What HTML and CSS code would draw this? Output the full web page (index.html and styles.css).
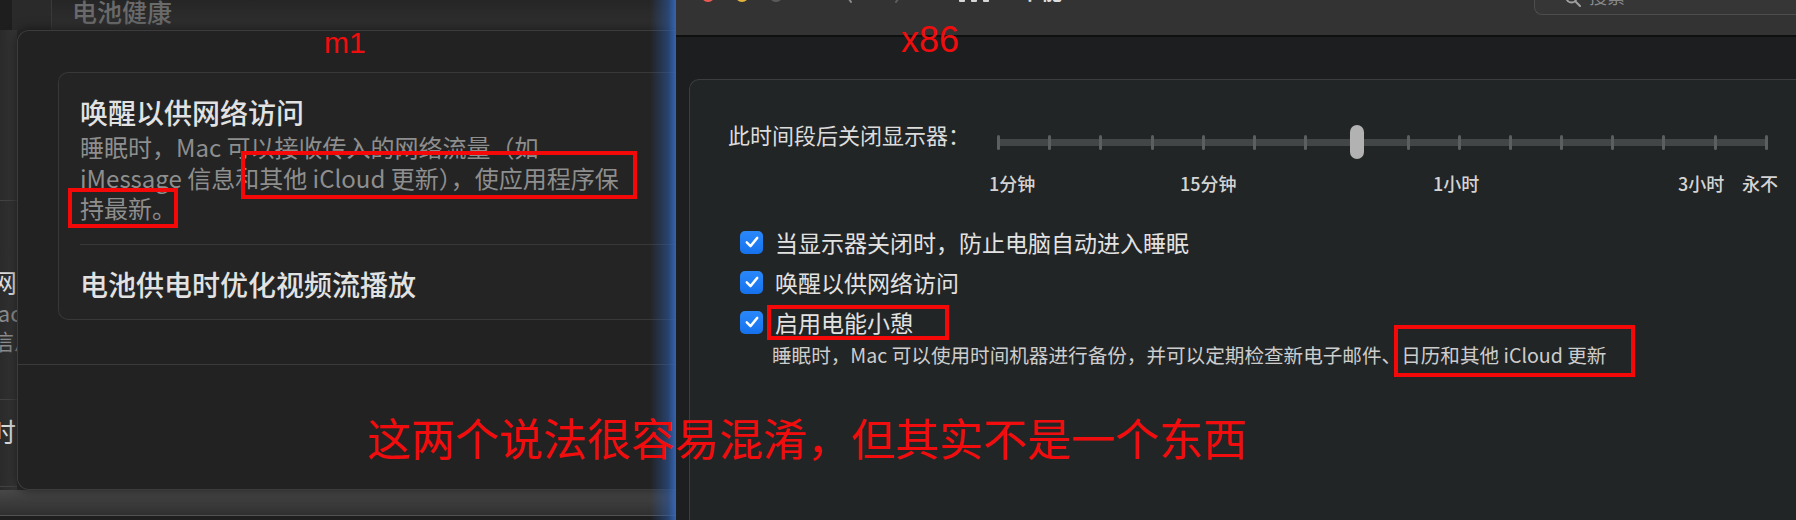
FILE: index.html
```html
<!DOCTYPE html>
<html lang="zh-CN">
<head>
<meta charset="utf-8">
<title>m1 与 x86 节能设置对比</title>
<link rel="stylesheet" href="styles.css">
</head>
<body>
<div class="screen">
  <section class="pane-m1">
    <div class="behind">
      <div class="behind-top">
        <div class="behind-sidebar"></div>
        <div class="behind-heading">电池健康</div>
      </div>
      <div class="behind-strip">
        <div class="frag-rule frag-rule-top"></div>
        <div class="frag frag-title frag-net">网络</div>
        <div class="frag frag-desc frag-mac">Mac</div>
        <div class="frag frag-desc frag-msg">信息</div>
        <div class="frag-rule frag-rule-mid"></div>
        <div class="frag frag-title frag-time">时</div>
        <div class="frag-rule frag-rule-low"></div>
      </div>
      <div class="behind-bottom"></div>
    </div>

    <div class="sheet">
      <div class="sheet-body">
        <div class="card">
          <div class="card-row">
            <div class="row-title">唤醒以供网络访问</div>
            <p class="row-desc">睡眠时，Mac 可以接收传入的网络流量（如iMessage 信息和其他 iCloud 更新），使应用程序保持最新。</p>
          </div>
          <div class="card-row">
            <div class="row-title">电池供电时优化视频流播放</div>
          </div>
        </div>
      </div>
      <div class="sheet-footer"></div>
    </div>
    <div class="glow"></div>
  </section>

  <section class="pane-x86">
    <header class="titlebar">
      <div class="lights">
        <span class="light light-red"></span>
        <span class="light light-yellow"></span>
        <span class="light light-gray"></span>
      </div>
      <svg class="chev chev-back" viewBox="0 0 10 20" width="10" height="20"><path d="M8 1 L2 10 L8 19" fill="none" stroke="#8a8a8a" stroke-width="2" stroke-linecap="round"/></svg>
      <svg class="chev chev-fwd" viewBox="0 0 10 20" width="10" height="20"><path d="M2 1 L8 10 L2 19" fill="none" stroke="#5e5e5e" stroke-width="2" stroke-linecap="round"/></svg>
      <svg class="grid-icon" viewBox="0 0 32 20" width="32" height="20">
        <g fill="#d8d8d8">
          <rect x="1" y="1" width="6" height="6" rx="1"/><rect x="13" y="1" width="6" height="6" rx="1"/><rect x="25" y="1" width="6" height="6" rx="1"/>
          <rect x="1" y="13" width="6" height="6" rx="1"/><rect x="13" y="13" width="6" height="6" rx="1"/><rect x="25" y="13" width="6" height="6" rx="1"/>
        </g>
      </svg>
      <div class="win-title">节能</div>
      <div class="search">
        <svg class="search-glass" viewBox="0 0 16 16" width="16" height="16"><circle cx="6.5" cy="6.5" r="5" fill="none" stroke="#a0a0a0" stroke-width="2"/><path d="M10.5 10.5 L15 15" stroke="#a0a0a0" stroke-width="2" stroke-linecap="round"/></svg>
        <span class="search-text">搜索</span>
      </div>
    </header>

    <main class="prefs">
      <div class="group">
        <div class="slider-row">
          <div class="slider-label">此时间段后关闭显示器：</div>
          <div class="slider">
            <div class="track"></div>
            <div class="ticks">
              <span></span><span></span><span></span><span></span>
              <span></span><span></span><span></span><span></span>
              <span></span><span></span><span></span><span></span>
              <span></span><span></span><span></span><span></span>
            </div>
            <div class="knob" style="left: 359.9px"></div>
          </div>
        </div>
        <div class="tick-labels">
          <span style="left: -8px">1分钟</span>
          <span style="left: 183px">15分钟</span>
          <span style="left: 436px">1小时</span>
          <span style="left: 681px">3小时</span>
          <span style="left: 745px">永不</span>
        </div>
        <ul class="checks">
          <li><span class="cb"><svg viewBox="0 0 24 24" width="18" height="18"><path d="M5 12.5 L10 17.5 L19 6.5" fill="none" stroke="#fff" stroke-width="3.2" stroke-linecap="round" stroke-linejoin="round"/></svg></span>当显示器关闭时，防止电脑自动进入睡眠</li>
          <li><span class="cb"><svg viewBox="0 0 24 24" width="18" height="18"><path d="M5 12.5 L10 17.5 L19 6.5" fill="none" stroke="#fff" stroke-width="3.2" stroke-linecap="round" stroke-linejoin="round"/></svg></span>唤醒以供网络访问</li>
          <li><span class="cb"><svg viewBox="0 0 24 24" width="18" height="18"><path d="M5 12.5 L10 17.5 L19 6.5" fill="none" stroke="#fff" stroke-width="3.2" stroke-linecap="round" stroke-linejoin="round"/></svg></span>启用电能小憩</li>
        </ul>
        <p class="check-desc">睡眠时，Mac 可以使用时间机器进行备份，并可以定期检查新电子邮件、日历和其他 iCloud 更新</p>
      </div>
    </main>
  </section>

  <div class="note note-m1">m1</div>
  <div class="note note-x86">x86</div>
  <div class="note note-main">这两个说法很容易混淆，但其实不是一个东西</div>
  <div class="mark mark-a"></div>
  <div class="mark mark-b"></div>
  <div class="mark mark-c"></div>
  <div class="mark mark-d"></div>
</div>
</body>
</html>
```

FILE: styles.css
```css
* { box-sizing: border-box; margin: 0; padding: 0; }

html, body {
  width: 1796px;
  height: 520px;
  overflow: hidden;
  background: #1c1e1f;
}

body {
  font-family: "Noto Sans CJK SC", "Noto Sans", sans-serif;
  color: #e0e0e0;
}

.screen {
  position: relative;
  display: grid;
  grid-template-columns: 676px 1120px;
  height: 520px;
}

/* ---------- left: m1 sheet ---------- */
.pane-m1 {
  position: relative;
  overflow: hidden;
  height: 520px;
  background: #2c2c2c;
}

.behind {
  display: flex;
  flex-direction: column;
  height: 100%;
}

.behind-top {
  height: 30px;
  flex: none;
  display: flex;
  background: linear-gradient(#252525, #313131);
  overflow: hidden;
}

.behind-sidebar {
  width: 52px;
  flex: none;
  border-right: 1px solid #3a3a3a;
  background: linear-gradient(to right, #1e1e1e 12px, #2a2a2a 12px);
}

.behind-heading {
  padding-left: 20px;
  margin-top: -3px;
  font-size: 25px;
  line-height: 28px;
  font-weight: 500;
  color: #6a6a6a;
}

.behind-strip {
  flex: 1;
  display: flex;
  flex-direction: column;
  background: linear-gradient(to right, #2a2a2a, #363636 17px, #2a2a2a 17px);
  white-space: nowrap;
}

.frag-rule {
  width: 17px;
  height: 1px;
  flex: none;
  background: #424242;
}
.frag-rule-top { margin-top: 170px; }
.frag-rule-mid { margin-top: 46px; }
.frag-rule-low { margin-top: 40px; }

.frag-title { font-size: 26px; line-height: 30px; color: #dcdcdc; }
.frag-desc { font-size: 22px; line-height: 26px; color: #8c8c8c; }
.frag-net { margin: 66px 0 0 -9px; }
.frag-mac { margin: 2px 0 0 -20px; }
.frag-msg { margin: 2px 0 0 -8px; }
.frag-time { margin: 16px 0 0 -10px; }

.behind-bottom {
  height: 30px;
  flex: none;
  margin-top: auto;
  background: linear-gradient(#484848 0, #2f2f2f 25px, #525252 25px, #525252 26px, #1e1e1e 26px);
}

.sheet {
  position: absolute;
  left: 17px;
  top: 30px;
  width: 700px;
  height: 460px;
  display: flex;
  flex-direction: column;
  background: #222222;
  border: 1px solid #3c3c3c;
  border-right: 0;
  border-radius: 12px 0 0 12px;
  box-shadow: 0 0 12px rgba(0, 0, 0, 0.55);
}

.sheet-body {
  padding: 41px 0 44px 40px;
}

.card {
  border: 1px solid #383838;
  border-right: 0;
  border-radius: 10px 0 0 10px;
  background: #242424;
}

.card-row {
  margin-left: 21px;
  padding: 22px 0 20px;
}

.card-row + .card-row {
  border-top: 1px solid #383838;
  padding: 22px 0 18px;
}

.row-title {
  font-size: 28px;
  line-height: 34px;
  font-weight: 500;
  color: #e2e2e2;
}

.row-desc {
  width: 541px;
  margin-top: 3px;
  font-size: 24px;
  line-height: 30.5px;
  color: #8e8e8e;
}

.sheet-footer {
  flex: 1;
  border-top: 1px solid #3a3a3a;
}

.glow {
  position: absolute;
  top: 0;
  right: 0;
  width: 26px;
  height: 100%;
  background: linear-gradient(to right, rgba(40, 85, 160, 0), rgba(44, 92, 170, 0.55) 70%, rgba(54, 106, 190, 0.92));
}

/* ---------- right: x86 preferences ---------- */
.pane-x86 {
  display: flex;
  flex-direction: column;
  height: 520px;
  overflow: hidden;
  background: #1c1e1f;
}

.titlebar {
  height: 37px;
  flex: none;
  display: flex;
  align-items: flex-start;
  background: #333333;
  border-bottom: 2px solid #0e0f0f;
  overflow: hidden;
}

.lights {
  display: flex;
  gap: 20px;
  margin: -12px 0 0 25px;
}

.light {
  width: 14px;
  height: 14px;
  border-radius: 50%;
}
.light-red { background: #ee5a52; }
.light-yellow { background: #e5b43a; }
.light-gray { background: #5b5b5b; }

.chev { flex: none; margin-top: -17px; }
.chev-back { margin-left: 60px; }
.chev-fwd { margin-left: 41px; }

.grid-icon { flex: none; margin: -17px 0 0 54px; }

.win-title {
  margin: -20px 0 0 32px;
  font-size: 20px;
  line-height: 24px;
  font-weight: 700;
  color: #dedede;
}

.search {
  display: flex;
  align-items: flex-end;
  width: 262px;
  height: 40px;
  margin: -25px 0 0 auto;
  padding: 0 0 9px 30px;
  border: 1px solid #4d4d4d;
  border-right: 0;
  border-radius: 8px 0 0 8px;
  background: #363636;
}

.search-glass { flex: none; margin-bottom: -2px; }

.search-text {
  margin-left: 8px;
  font-size: 18px;
  line-height: 18px;
  color: #8a8a8a;
}

.prefs {
  flex: 1;
  padding: 42px 0 0 13px;
}

.group {
  height: 100%;
  padding: 40px 0 0 38px;
  background: #222526;
  border: 1px solid #3b3e3f;
  border-right: 0;
  border-bottom: 0;
  border-radius: 10px 0 0 0;
}

.slider-row {
  display: flex;
  height: 44px;
}

.slider-label {
  width: 269px;
  flex: none;
  font-size: 22px;
  line-height: 28px;
  color: #dcdcdc;
}

.slider {
  position: relative;
  width: 771px;
  height: 44px;
}

.track {
  position: absolute;
  left: 0;
  right: 0;
  top: 18.5px;
  height: 7px;
  border-radius: 4px;
  background: #434647;
}

.ticks {
  position: absolute;
  inset: 0;
  display: flex;
  justify-content: space-between;
  align-items: center;
}

.ticks span {
  width: 3px;
  height: 15px;
  border-radius: 1.5px;
  background: #5c5f60;
}

.knob {
  position: absolute;
  top: 5px;
  width: 14px;
  height: 34px;
  border-radius: 7px;
  background: #b2b2b2;
  transform: translateX(-50%);
}

.tick-labels {
  position: relative;
  height: 22px;
  margin: 8px 0 0 269px;
  font-size: 18px;
  line-height: 22px;
  font-weight: 500;
  color: #d4d4d4;
}

.tick-labels span {
  position: absolute;
  top: 0;
  white-space: nowrap;
}

.checks {
  list-style: none;
  margin-top: 28px;
  padding-left: 12px;
}

.checks li {
  display: flex;
  align-items: center;
  height: 40px;
  font-size: 23px;
  color: #e2e2e2;
}

.cb {
  width: 23px;
  height: 23px;
  flex: none;
  margin-right: 12px;
  display: flex;
  align-items: center;
  justify-content: center;
  border-radius: 5px;
  background: linear-gradient(#2a88fb, #1672ec);
}

.check-desc {
  padding-left: 44px;
  font-size: 19.6px;
  line-height: 26px;
  color: #cdcdcd;
  white-space: nowrap;
}

/* ---------- red annotations ---------- */
.note {
  position: absolute;
  color: #f10d0d;
  white-space: nowrap;
}

.note-m1 {
  left: 324px;
  top: 28px;
  font-family: "Liberation Sans", Arial, sans-serif;
  font-size: 30px;
  line-height: 30px;
}

.note-x86 {
  left: 901px;
  top: 22px;
  font-family: "Liberation Sans", Arial, sans-serif;
  font-size: 36px;
  line-height: 36px;
}

.note-main {
  left: 367px;
  top: 415px;
  font-family: "Noto Sans CJK SC", sans-serif;
  font-size: 44px;
  line-height: 44px;
}

.mark {
  position: absolute;
  border: 4px solid #f50808;
}
.mark-a { left: 241px; top: 151px; width: 396px; height: 48px; }
.mark-b { left: 68px; top: 188px; width: 110px; height: 40px; }
.mark-c { left: 767px; top: 305px; width: 182px; height: 35px; }
.mark-d { left: 1394px; top: 325px; width: 241px; height: 52px; }
```
